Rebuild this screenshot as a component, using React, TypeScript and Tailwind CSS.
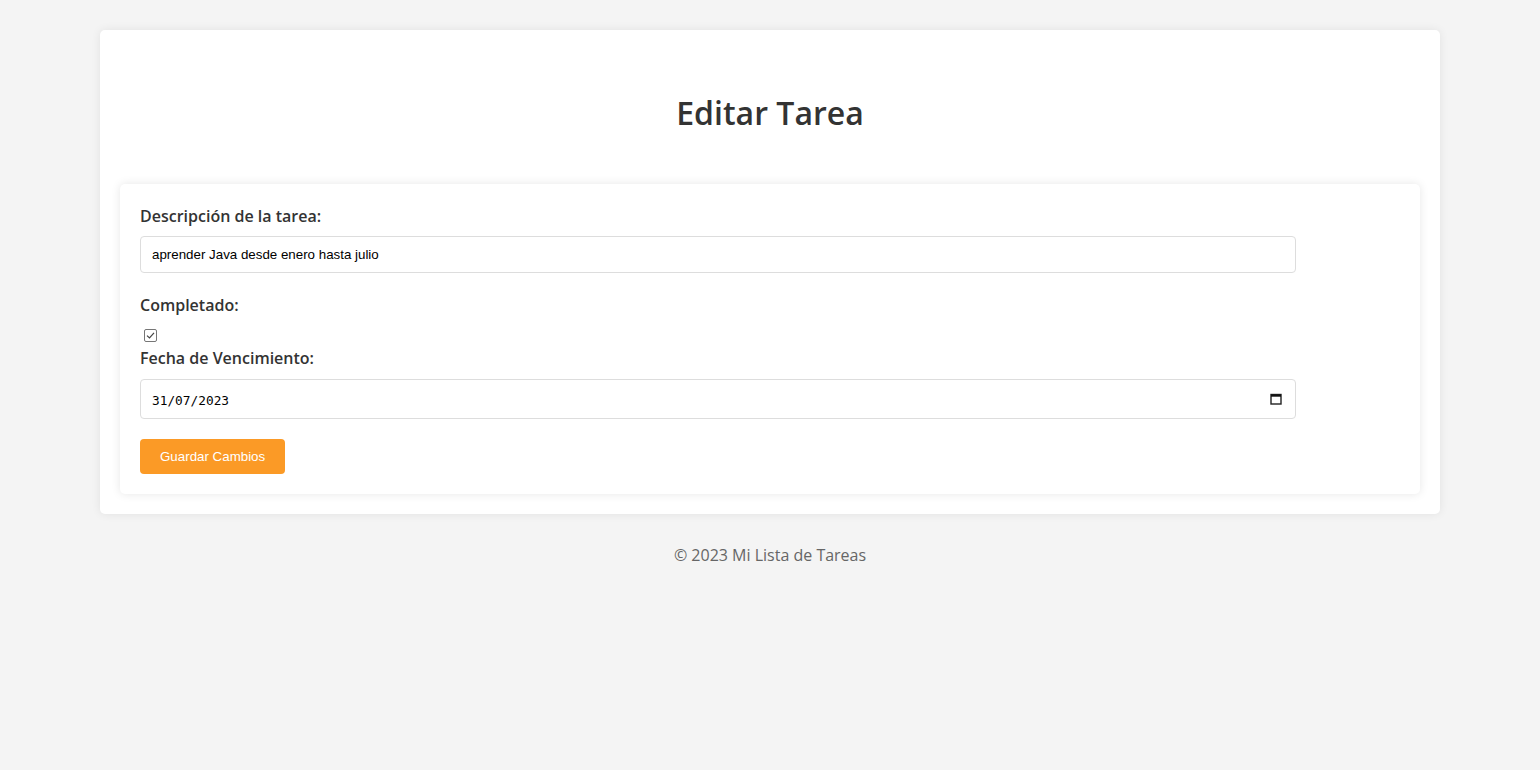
const EditTaskPage = () => {
  return (
    <div className="min-h-[770px] bg-[#f4f4f4] pt-[30px] font-['Open_Sans',sans-serif]">
      <div className="mx-[100px] rounded-[5px] bg-white px-5 pt-[59px] pb-5 shadow-[0_0_10px_rgba(0,0,0,0.08)]">
        <h1 className="mb-[47px] h-[48px] text-center text-[32px] leading-[48px] font-semibold text-[#333]">
          Editar Tarea
        </h1>

        <div className="rounded-[5px] bg-white p-5 shadow-[0_0_10px_rgba(0,0,0,0.1)]">
          {/* Descripción */}
          <label className="mb-2 block text-[16px] leading-6 font-semibold text-[#333]">
            Descripción de la tarea:
          </label>
          <div className="mb-5 flex h-[37px] w-[1156px] items-center rounded-[4px] border border-[#ddd] px-[11px] font-['Liberation_Sans',Arial,sans-serif] text-[13.33px] text-black">
            aprender Java desde enero hasta julio
          </div>

          {/* Completado */}
          <label className="mb-2 block text-[16px] leading-6 font-semibold text-[#333]">
            Completado:
          </label>
          <div className="h-[21px] pt-1 pl-1">
            <span className="flex h-[13px] w-[13px] items-center justify-center rounded-[2px] border border-[#767676] bg-white">
              <svg width="9" height="9" viewBox="0 0 9 9" fill="none">
                <path d="M1 4.6 L3.5 7 L8 1.8" stroke="#444" strokeWidth="1.2" />
              </svg>
            </span>
          </div>

          {/* Fecha */}
          <label className="mb-[9px] block text-[16px] leading-6 font-semibold text-[#333]">
            Fecha de Vencimiento:
          </label>
          <div className="mb-5 flex h-[40px] w-[1156px] items-center justify-between rounded-[4px] border border-[#ddd] pr-[13px] pl-[11px] font-['DejaVu_Sans_Mono',monospace] text-[12.8px] text-black">
            <span className="pt-[3px]">31/07/2023</span>
            <svg width="12" height="12" viewBox="0 0 12 12" fill="none">
              <rect x="1" y="1.5" width="10" height="9.5" stroke="#222" strokeWidth="1.4" />
              <rect x="1" y="1.5" width="10" height="2.2" fill="#111" />
            </svg>
          </div>

          <button className="h-[35px] rounded-[4px] bg-[#fb9a26] px-5 font-['Liberation_Sans',Arial,sans-serif] text-[13.33px] text-white">
            Guardar Cambios
          </button>
        </div>
      </div>

      <footer className="mt-[29px] text-center text-[16px] leading-6 text-[#666]">
        © 2023 Mi Lista de Tareas
      </footer>
    </div>
  );
};

export default function App() {
  return <EditTaskPage />;
}
